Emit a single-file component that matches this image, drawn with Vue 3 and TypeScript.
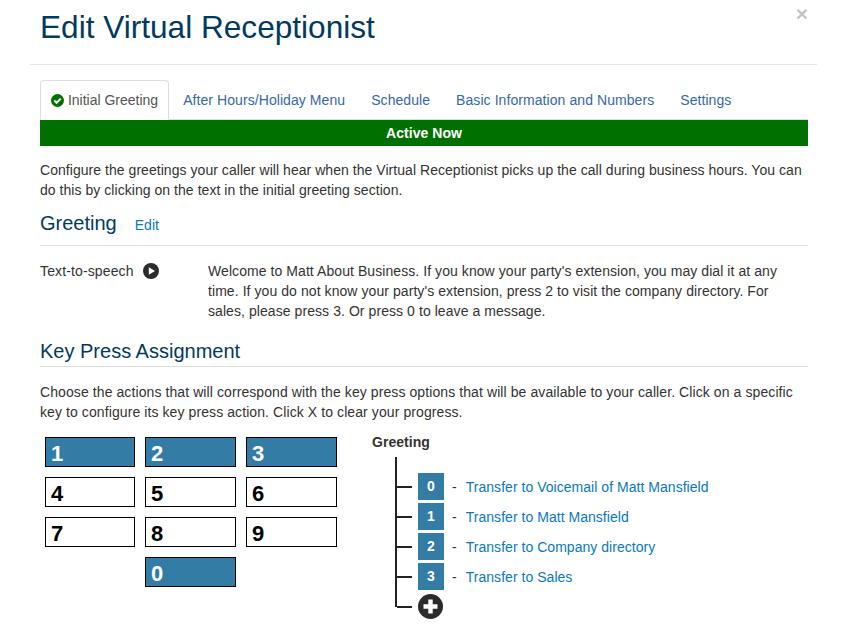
<script setup lang="ts">
const tabs: string[] = ['After Hours/Holiday Menu', 'Schedule', 'Basic Information and Numbers', 'Settings']
const keys = [
  { n: '1', on: true }, { n: '2', on: true }, { n: '3', on: true },
  { n: '4', on: false }, { n: '5', on: false }, { n: '6', on: false },
  { n: '7', on: false }, { n: '8', on: false }, { n: '9', on: false },
  { n: '0', on: true },
]
const assignments = [
  { n: '0', text: 'Transfer to Voicemail of Matt Mansfield' },
  { n: '1', text: 'Transfer to Matt Mansfield' },
  { n: '2', text: 'Transfer to Company directory' },
  { n: '3', text: 'Transfer to Sales' },
]
</script>

<template>
  <div class="modal">
    <header class="head">
      <h1>Edit Virtual Receptionist</h1>
      <span class="close">×</span>
    </header>
    <main class="body">
      <nav class="tabs">
        <a class="tab active">
          <svg class="check" viewBox="0 0 14 14" width="13" height="13">
            <circle cx="7" cy="7" r="7" fill="#007000" />
            <path d="M3.6 7.1 6 9.5 10.5 5" fill="none" stroke="#fff" stroke-width="2.2" />
          </svg>
          Initial Greeting
        </a>
        <a v-for="t in tabs" :key="t" class="tab">{{ t }}</a>
      </nav>
      <div class="active-bar">Active Now</div>
      <p class="intro">Configure the greetings your caller will hear when the Virtual Receptionist picks up the call during business hours. You can do this by clicking on the text in the initial greeting section.</p>

      <div class="greet-head">
        <h2>Greeting</h2>
        <a class="edit">Edit</a>
      </div>
      <div class="greet-row">
        <div class="greet-type">
          <span>Text-to-speech</span>
          <svg viewBox="0 0 16 16" width="16" height="16">
            <circle cx="8" cy="8" r="8" fill="#2b2b2b" />
            <path d="M5.8 4.2 12 8l-6.2 3.8z" fill="#fff" />
          </svg>
        </div>
        <p class="greet-text">Welcome to Matt About Business. If you know your party's extension, you may dial it at any time. If you do not know your party's extension, press 2 to visit the company directory. For sales, please press 3. Or press 0 to leave a message.</p>
      </div>

      <h2 class="kp-title">Key Press Assignment</h2>
      <p class="kp-intro">Choose the actions that will correspond with the key press options that will be available to your caller. Click on a specific key to configure its key press action. Click X to clear your progress.</p>

      <div class="kp">
        <div class="keypad">
          <div v-for="k in keys" :key="k.n" class="key" :class="{ on: k.on, zero: k.n === '0' }">{{ k.n }}</div>
        </div>
        <div class="tree">
          <div class="tree-title">Greeting</div>
          <ul class="branch">
            <li v-for="a in assignments" :key="a.n" class="leaf">
              <span class="stub"></span>
              <span class="badge">{{ a.n }}</span>
              <span class="dash">-</span>
              <a class="link">{{ a.text }}</a>
            </li>
            <li class="leaf last">
              <span class="stub"></span>
              <svg viewBox="0 0 25 25" width="25" height="25">
                <circle cx="12.5" cy="12.5" r="12.5" fill="#2b2b2b" />
                <path d="M12.5 5.5v14M5.5 12.5h14" stroke="#fff" stroke-width="4.4" />
              </svg>
            </li>
          </ul>
        </div>
      </div>
    </main>
  </div>
</template>

<style scoped>
.modal {
  width: 850px;
  height: 629px;
  overflow: hidden;
  background: #fff;
  font-family: "Liberation Sans", Arial, sans-serif;
  font-size: 14px;
  line-height: 20px;
  letter-spacing: 0.035px;
  color: #333;
}
.head {
  display: flex;
  justify-content: space-between;
  margin: 0 33px 0 30px;
  padding: 0 0 0 10px;
  height: 65px;
  border-bottom: 1px solid #e5e5e5;
  box-sizing: border-box;
}
h1 {
  margin: 9px 0 0;
  font-size: 31.6px;
  line-height: 36px;
  font-weight: 400;
  letter-spacing: 0;
  color: #003b5f;
}
.close {
  font-size: 21px;
  font-weight: 700;
  line-height: 21px;
  margin: 3px 9px 0 0;
  color: #c4c4c4;
}
.body {
  padding: 15px 42px 0 40px;
}
.tabs {
  display: flex;
  height: 40px;
  border-bottom: 1px solid #ddd;
  box-sizing: border-box;
}
.tab {
  padding: 9px 12px 0;
  height: 40px;
  box-sizing: border-box;
  letter-spacing: 0.07px;
  color: #3569a8;
  border: 1px solid transparent;
  border-radius: 4px 4px 0 0;
  white-space: nowrap;
}
.tab.active {
  color: #555;
  background: #fff;
  border-color: #ddd #ddd #fff;
  padding: 9px 10px 0;
  margin-right: 1px;
  letter-spacing: 0;
}
.check {
  vertical-align: -2px;
}
.active-bar {
  height: 26px;
  line-height: 26px;
  background: #007000;
  color: #fff;
  font-weight: 700;
  text-align: center;
}
.intro {
  margin: 14px 0 0;
  letter-spacing: 0.045px;
}
.greet-head {
  display: flex;
  align-items: baseline;
  gap: 18px;
  margin-top: 10px;
  padding-bottom: 9px;
  border-bottom: 1px solid #e0e0e0;
}
h2 {
  margin: 0;
  font-size: 20px;
  line-height: 26px;
  font-weight: 400;
  letter-spacing: 0;
  color: #003b5f;
}
.edit, .link {
  color: #0a78c2;
}
.greet-row {
  display: flex;
  margin-top: 15px;
}
.greet-type {
  flex: 0 0 168px;
  display: flex;
  align-items: center;
  gap: 9px;
  height: 20px;
  letter-spacing: 0.13px;
}
.greet-text {
  margin: 0;
  padding-right: 15px;
  letter-spacing: 0.07px;
}
.kp-title {
  margin-top: 17px;
  padding-bottom: 2px;
  border-bottom: 1px solid #e0e0e0;
}
.kp-intro {
  margin: 15px 0 0;
  letter-spacing: 0.09px;
}
.kp {
  display: flex;
  margin-top: 15px;
}
.keypad {
  display: grid;
  grid-template-columns: 90px 91px 91px;
  grid-auto-rows: 30px;
  gap: 10px;
  margin-left: 5px;
  width: 292px;
  flex: none;
}
.key {
  box-sizing: border-box;
  border: 1px solid #000;
  background: #fff;
  color: #000;
  font-weight: 700;
  font-size: 22px;
  line-height: 31px;
  padding-left: 5px;
}
.key.on {
  background: #337ca6;
  color: #fff;
}
.key.zero {
  grid-column: 2;
}
.tree {
  margin-left: 35px;
}
.tree-title {
  font-weight: 700;
  line-height: 20px;
  margin-top: -5px;
}
.branch {
  list-style: none;
  margin: 5px 0 0 23px;
  padding: 16px 0 0;
  border-left: 2px solid #222;
  height: 134px;
  box-sizing: content-box;
}
.leaf {
  display: flex;
  align-items: center;
  height: 27px;
  margin-bottom: 3px;
  white-space: nowrap;
}
.leaf.last {
  height: 25px;
  margin: 4px 0 0;
}
.stub {
  width: 15px;
  height: 2px;
  background: #222;
  margin-right: 6px;
}
.badge {
  width: 26px;
  height: 27px;
  background: #337ca6;
  color: #fff;
  font-weight: 700;
  text-align: center;
  line-height: 26px;
}
.dash {
  margin: 0 9px 0 8px;
}
</style>

<style>
html, body { margin: 0; background: #fff; }
</style>
